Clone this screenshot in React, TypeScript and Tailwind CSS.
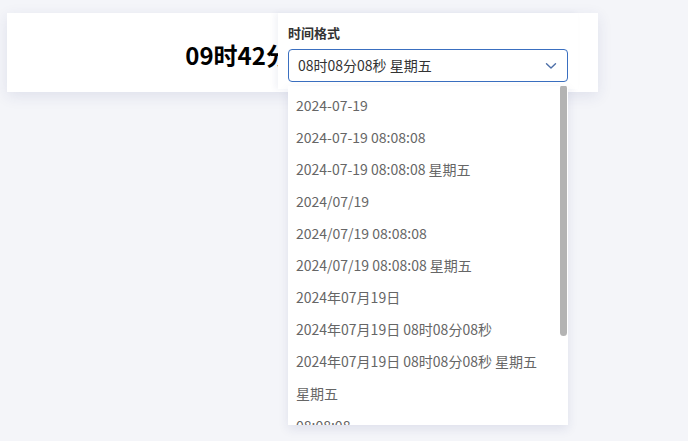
import React from "react";

const items = [
  "2024-07-19",
  "2024-07-19 08:08:08",
  "2024-07-19 08:08:08 星期五",
  "2024/07/19",
  "2024/07/19 08:08:08",
  "2024/07/19 08:08:08 星期五",
  "2024年07月19日",
  "2024年07月19日 08时08分08秒",
  "2024年07月19日 08时08分08秒 星期五",
  "星期五",
  "08:08:08",
  "08时08分08秒",
  "08时08分08秒 星期五",
];

export default function App() {
  return (
    <div
      className="w-[688px] h-[441px] bg-[#f4f5f9] overflow-hidden pt-[13px] pl-[7px]"
      style={{ fontFamily: '"Noto Sans CJK SC", "Noto Sans", sans-serif' }}
    >
      <div className="relative w-[591px] h-[79px] bg-white shadow-[0_4px_14px_rgba(40,50,120,0.10)] flex items-center justify-center">
        <div className="text-[24px] font-bold text-black leading-none mt-[4px]">
          09时42分08秒 星期五
        </div>
        <div className="absolute left-[271px] top-0 w-[300px] h-[76px] bg-white shadow-[-3px_0_6px_rgba(40,50,120,0.06)] pl-[10px] pt-[10px] flex flex-col gap-[6px]">
          <div className="text-[13px] font-semibold text-[#333] leading-[20px]">时间格式</div>
          <div className="w-[280px] h-[33px] rounded-[4px] border border-[#3a6fc0] flex items-center justify-between pl-[9px] pr-[10px]">
            <span className="text-[14px] text-[#333]">08时08分08秒 星期五</span>
            <svg width="12" height="8" viewBox="0 0 12 8" fill="none">
              <path d="M1.5 1.8 L6 6 L10.5 1.8" stroke="#4d6fa8" strokeWidth="1.4" strokeLinecap="round" strokeLinejoin="round" />
            </svg>
          </div>
        </div>
        <div className="absolute left-[281px] top-[73px] w-[280px] h-[339px] bg-white shadow-[0_4px_10px_rgba(40,50,120,0.10)] overflow-hidden">
          <div className="pt-[3px] flex flex-col">
            {items.map((t) => (
              <div key={t} className="h-[32px] flex items-center pl-[8px] text-[14px] text-[#666] whitespace-nowrap">
                {t}
              </div>
            ))}
          </div>
          <div className="absolute right-[1px] top-[-1px] w-[7px] h-[251px] rounded-full bg-[#b3b3b3]" />
        </div>
      </div>
    </div>
  );
}
